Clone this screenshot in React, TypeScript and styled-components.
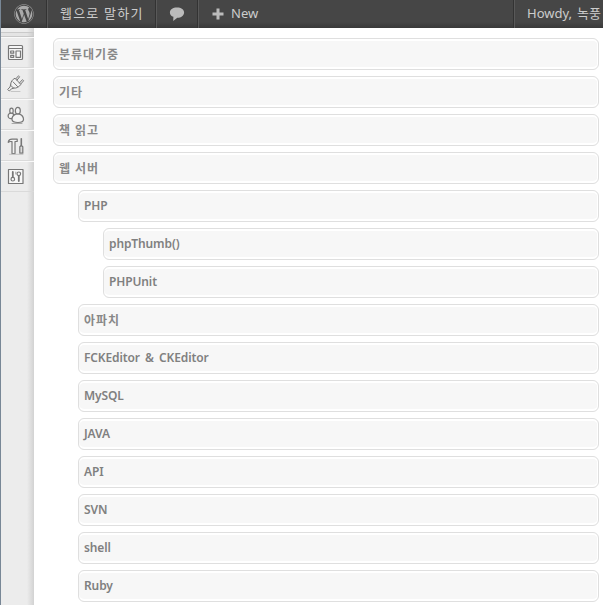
import React from "react";
import styled, { createGlobalStyle } from "styled-components";
import { FaWordpress } from "react-icons/fa";

const GlobalStyle = createGlobalStyle`
  body { margin: 0; background: #fff; overflow: hidden; }
  * { box-sizing: border-box; }
`;

const Screen = styled.div`
  height: 605px;
  display: flex;
  flex-direction: column;
  overflow: hidden;
  border-left: 1px solid #788796;
  font-family: "Noto Sans", "Noto Sans CJK KR", sans-serif;
`;

const AdminBar = styled.header`
  height: 28px;
  flex: none;
  display: flex;
  background: linear-gradient(#464646 0, #464646 22px, #393939 28px);
  color: #ccc;
  font-size: 13px;
`;

const BarItem = styled.div<{ $width: number; $pad: number }>`
  width: ${(p) => p.$width}px;
  padding-left: ${(p) => p.$pad}px;
  flex: none;
  display: flex;
  align-items: center;
  white-space: nowrap;
  border-right: 1px solid #333;
  box-shadow: 1px 0 #595959;
`;

const BarText = styled.span<{ $track?: number }>`
  line-height: 27px;
  height: 28px;
  letter-spacing: ${(p) => p.$track ?? 0}px;
`;

const Account = styled.div`
  flex: none;
  width: 89px;
  margin-left: auto;
  padding-left: 12px;
  border-left: 1px solid #595959;
  box-shadow: -1px 0 #333;
  overflow: hidden;
  white-space: nowrap;
  word-spacing: 1.5px;
`;

const Body = styled.div`
  flex: 1;
  display: flex;
  min-height: 0;
`;

const Sidebar = styled.nav`
  width: 33px;
  flex: none;
  background: linear-gradient(90deg, #ececec 0, #ececec 26px, #d2d2d2 33px);
`;

const SidebarCap = styled.div`
  height: 9px;
  padding-top: 4px;
  border-bottom: 1px solid #cfcfcf;
  &::before {
    content: "";
    display: block;
    height: 4px;
    border-top: 1px solid #cacaca;
    background: rgba(0, 0, 0, 0.03);
  }
`;

const MenuItem = styled.div`
  height: 31px;
  padding: 0 0 0 6px;
  display: flex;
  align-items: center;
  border-top: 1px solid #f9f9f9;
  border-bottom: 1px solid #dadada;
`;

const MenuIcon = styled.svg`
  width: 18px;
  height: 18px;
  fill: none;
  stroke: #777;
  stroke-width: 1.2;
  stroke-linejoin: round;
  stroke-linecap: round;
`;

const List = styled.main`
  flex: 1;
  min-width: 0;
  padding: 10px 4px 0 19px;
  display: flex;
  flex-direction: column;
  gap: 6px;
`;

const Entry = styled.div<{ $depth: number; $hangul?: boolean }>`
  height: 32px;
  flex: none;
  margin-left: ${(p) => p.$depth * 25}px;
  padding-left: 5px;
  border: 1px solid #dfdfdf;
  border-radius: 6px;
  background: #f7f7f7;
  box-shadow: inset 0 2px #fff, inset 0 -2px #fff, inset -1px 0 #fff;
  color: ${(p) => (p.$hangul ? "#888" : "#808080")};
  font-size: 12px;
  font-weight: 600;
  line-height: ${(p) => (p.$hangul ? 32 : 30)}px;
  letter-spacing: ${(p) => (p.$hangul ? 0.95 : -0.12)}px;
  word-spacing: ${(p) => (p.$hangul ? 0 : 2.2)}px;
  white-space: nowrap;
`;

const entries = [
  { name: "분류대기중", depth: 0, hangul: true },
  { name: "기타", depth: 0, hangul: true },
  { name: "책 읽고", depth: 0, hangul: true },
  { name: "웹 서버", depth: 0, hangul: true },
  { name: "PHP", depth: 1 },
  { name: "phpThumb()", depth: 2 },
  { name: "PHPUnit", depth: 2 },
  { name: "아파치", depth: 1, hangul: true },
  { name: "FCKEditor & CKEditor", depth: 1 },
  { name: "MySQL", depth: 1 },
  { name: "JAVA", depth: 1 },
  { name: "API", depth: 1 },
  { name: "SVN", depth: 1 },
  { name: "shell", depth: 1 },
  { name: "Ruby", depth: 1 },
];

const menuDrawings = [
  <g key="appearance">
    <rect x="1.5" y="1.5" width="14" height="14" rx="1" fill="#f6f6f6" />
    <path d="M2 4.5H15" />
    <rect x="3.7" y="7" width="3" height="2.2" />
    <rect x="3.7" y="11.3" width="3" height="2" />
    <rect x="9" y="7" width="4.5" height="6.3" />
  </g>,
  <g key="plugins" strokeWidth="1">
    <path d="M3.6 9.8C3.6 7 5.3 4.4 8 3.2L13.8 9.4C12.3 12 9.5 13.5 6.8 13.1Z" fill="#f2f2f2" />
    <path d="M8.7 3.9L11.5 .8L12.6 1.8L10 5.2M12.5 7.9L15.5 4.6L16.6 5.8L13.8 9M6 6.8L10.6 11.6" />
    <path d="M3.6 9.8L3 12L.7 14.4L2.2 16L4.7 13.8L6.8 13.1" />
    <path d="M4 16.5H13" stroke="#c5c5c5" />
  </g>,
  <g key="users" fill="#f4f4f4" transform="translate(0 .7)">
    <ellipse cx="4.5" cy="4.2" rx="1.7" ry="2.7" />
    <ellipse cx="10.8" cy="4" rx="2.5" ry="3.3" />
    <ellipse cx="4" cy="9.2" rx="2.9" ry="2.8" />
    <path d="M8.7 7.4C6.2 8.5 4.8 10.8 5 13C5.3 15.3 8 15.8 11 15.8C14.5 15.8 16.5 14.8 16.5 12.8C16.5 10.5 14.7 8.2 12.6 7.4Z" />
    <path d="M5 16.8H15" stroke="#aaa" strokeWidth="1" />
  </g>,
  <g key="tools" transform="translate(0 .5)">
    <path d="M1.3 4.5C1.8 2.4 3.2 1.7 5 1.7H10.2V4H8V16.2H5V4.2C3.6 3.8 2.4 4 1.3 4.9Z" fill="#f1f1f1" />
    <path d="M14.3 1.3V8" strokeWidth="1.6" />
    <path d="M12.8 9.3L14.3 8L15.8 9.3V15.7H12.8Z" fill="#ddd" />
    <path d="M2.5 16.8H16" stroke="#c2c2c2" strokeWidth="1" />
  </g>,
  <g key="settings">
    <rect x="1.5" y="1.5" width="14.5" height="14" fill="#f8f8f8" />
    <path d="M5.8 4V9M11.8 8V13" strokeWidth="1.8" />
    <circle cx="5.8" cy="11.2" r="1.8" />
    <circle cx="11.8" cy="5.8" r="1.8" />
    <path d="M8.8 4V6" stroke="#aaa" />
  </g>,
];

const CommentIcon = () => (
  <svg width="16" height="16" viewBox="0 0 16 16">
    <path d="M8 1.5C3.8 1.5.9 3.6.9 6.4C.9 8.5 2.2 10.1 4.4 10.8L4.2 14.9L8.3 11.8C12.2 11.8 15.1 9.2 15.1 6.4C15.1 3.6 12.2 1.5 8 1.5Z" fill="#bbb" />
  </svg>
);

const PlusIcon = () => (
  <svg width="12" height="12" viewBox="0 0 12 12">
    <path d="M4.5 .5H7.5V4.5H11.5V7.5H7.5V11.5H4.5V7.5H.5V4.5H4.5Z" fill="#bbb" />
  </svg>
);

const NewItem = styled(BarItem)`
  gap: 7.5px;
  border-right: 0;
  box-shadow: none;
`;

export default function App() {
  return (
    <Screen>
      <GlobalStyle />
      <AdminBar>
        <BarItem $width={46} $pad={13}>
          <FaWordpress size={20} color="#aaa" />
        </BarItem>
        <BarItem $width={109} $pad={13}>
          <BarText $track={1.2}>웹으로 말하기</BarText>
        </BarItem>
        <BarItem $width={42} $pad={13}>
          <CommentIcon />
        </BarItem>
        <NewItem $width={80} $pad={13.5}>
          <PlusIcon />
          <BarText>New</BarText>
        </NewItem>
        <Account>
          <BarText>Howdy, 녹풍</BarText>
        </Account>
      </AdminBar>
      <Body>
        <Sidebar>
          <SidebarCap />
          {menuDrawings.map((drawing) => (
            <MenuItem key={drawing.key}>
              <MenuIcon viewBox="0 0 18 18">{drawing}</MenuIcon>
            </MenuItem>
          ))}
        </Sidebar>
        <List>
          {entries.map((e) => (
            <Entry key={e.name} $depth={e.depth} $hangul={e.hangul}>
              {e.name}
            </Entry>
          ))}
        </List>
      </Body>
    </Screen>
  );
}
